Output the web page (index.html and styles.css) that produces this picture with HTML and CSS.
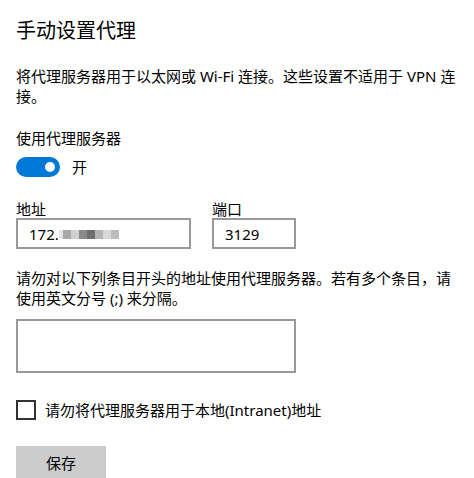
FILE: index.html
```html
<!DOCTYPE html>
<html lang="zh-CN">
<head>
    <meta charset="UTF-8">
    <title>手动设置代理</title>
    <link rel="stylesheet" href="styles.css">
</head>
<body>
    <div class="page">
        <h1 class="title">手动设置代理</h1>
        <p class="desc">将代理服务器用于以太网或 Wi-Fi 连接。这些设置不适用于 VPN 连接。</p>

        <div class="label switch-label">使用代理服务器</div>
        <div class="switch-row">
            <span class="toggle"><span class="knob"></span></span>
            <span class="switch-text">开</span>
        </div>

        <div class="fields">
            <div class="field">
                <div class="label">地址</div>
                <div class="input addr">
                    <span>172.</span>
                    <span class="mosaic">
                        <i class="m1"></i><i class="m2"></i><i class="m3"></i><i class="m4"></i><i class="m5"></i><i class="m6"></i><i class="m7"></i><i class="m8"></i>
                    </span>
                </div>
            </div>
            <div class="field">
                <div class="label">端口</div>
                <div class="input port">3129</div>
            </div>
        </div>

        <p class="desc exceptions">请勿对以下列条目开头的地址使用代理服务器。若有多个条目，请使用英文分号 (;) 来分隔。</p>
        <div class="textarea"></div>

        <label class="check-row">
            <span class="checkbox"></span>
            <span>请勿将代理服务器用于本地(Intranet)地址</span>
        </label>

        <button class="save">保存</button>
    </div>
</body>
</html>
```

FILE: styles.css
```css
body {
    margin: 0;
    background: #fff;
    color: #000;
    font-family: 'Noto Sans', 'Noto Sans CJK SC', sans-serif;
    font-size: 15px;
}
.page {
    padding: 18px 0 0 16px;
    width: 444px;
}
.title {
    font-family: 'Noto Sans', 'Noto Sans CJK SC', sans-serif;
    font-size: 20px;
    font-weight: normal;
    line-height: 26px;
    margin: 0 0 22px 0;
}
.desc {
    margin: 0;
    line-height: 20px;
}
.label {
    line-height: 20px;
}
.switch-label {
    margin-top: 22px;
}
.switch-row {
    display: flex;
    align-items: center;
    gap: 12px;
    margin-top: 9px;
    line-height: 20px;
}
.toggle {
    width: 44px;
    height: 20px;
    border-radius: 10px;
    background: #0078d7;
    display: flex;
    align-items: center;
    justify-content: flex-end;
    padding-right: 5px;
    box-sizing: border-box;
}
.knob {
    width: 10px;
    height: 10px;
    border-radius: 50%;
    background: #fff;
}
.fields {
    display: flex;
    gap: 21px;
    margin-top: 23px;
}
.field .label {
    line-height: 18px;
}
.input {
    height: 31px;
    border: 2px solid #999;
    box-sizing: border-box;
    display: flex;
    align-items: center;
    padding-left: 11px;
}
.addr {
    width: 175px;
}
.port {
    width: 84px;
}
.mosaic {
    display: flex;
    height: 9px;
    margin-top: 1px;
}
.mosaic i {
    display: block;
    width: 8px;
    height: 9px;
}
.mosaic .m1 { background: #e4e4e4; width: 4px; }
.mosaic .m2 { background: #a8a8a8; }
.mosaic .m3 { background: #d0d0d0; }
.mosaic .m4 { background: #8a8a8a; }
.mosaic .m5 { background: #6e6e6e; }
.mosaic .m6 { background: #b4b4b4; }
.mosaic .m7 { background: #d8d8d8; }
.mosaic .m8 { background: #bcbcbc; }
.exceptions {
    margin-top: 19px;
}
.textarea {
    width: 280px;
    height: 54px;
    border: 2px solid #999;
    box-sizing: border-box;
    margin-top: 11px;
}
.check-row {
    display: flex;
    align-items: center;
    gap: 9px;
    margin-top: 27px;
    line-height: 20px;
}
.checkbox {
    width: 20px;
    height: 20px;
    border: 2px solid #333;
    box-sizing: border-box;
}
.save {
    display: block;
    margin-top: 26px;
    width: 90px;
    height: 32px;
    border: none;
    background: #ccc;
    font-family: 'Noto Sans', 'Noto Sans CJK SC', sans-serif;
    font-size: 15px;
    color: #000;
    padding: 0;
}
```
